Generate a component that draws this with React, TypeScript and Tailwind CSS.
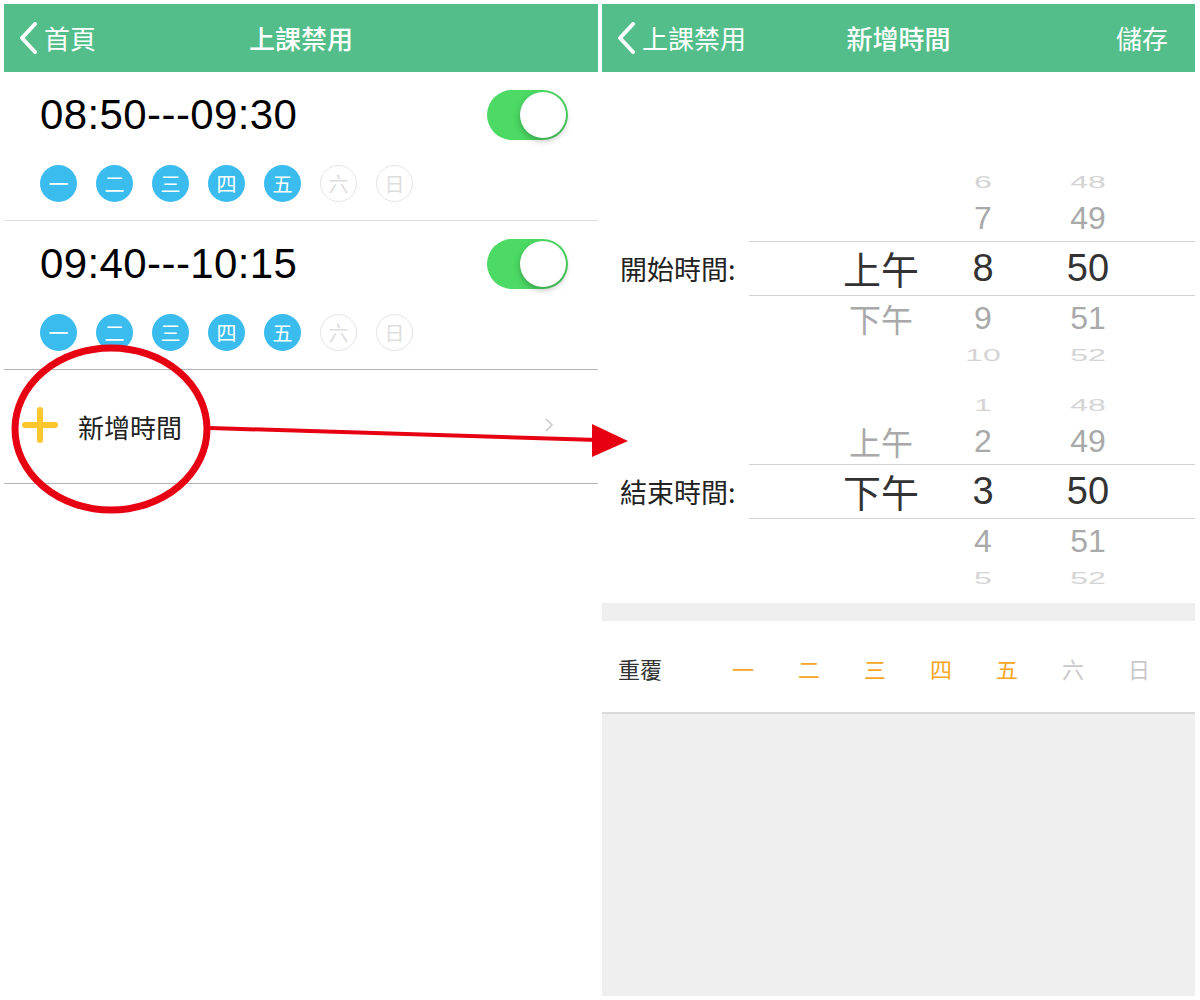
import React from 'react';

const cjk = "font-['Noto_Sans_CJK_TC',sans-serif]";
const num = "font-['Liberation_Sans','Noto_Sans_CJK_TC',sans-serif]";

const days = ['一', '二', '三', '四', '五', '六', '日'];

function Chevron() {
  return (
    <svg width="20" height="32" viewBox="0 0 20 32" className="shrink-0">
      <path d="M17 2 L4 16 L17 30" fill="none" stroke="white" strokeWidth="4" strokeLinecap="round" strokeLinejoin="round" />
    </svg>
  );
}

function Header({ back, title, action }: { back: string; title: string; action?: string }) {
  return (
    <div className={`relative flex h-[68px] items-center bg-[#53be89] text-white ${cjk}`}>
      <div className="flex items-center gap-[6px] pl-[14px]">
        <Chevron />
        <span className="text-[26px] leading-none">{back}</span>
      </div>
      <div className="absolute inset-x-0 top-0 flex h-full items-center justify-center pointer-events-none">
        <span className="text-[26px] font-medium leading-none">{title}</span>
      </div>
      {action && <span className="ml-auto pr-[27px] text-[26px] leading-none">{action}</span>}
    </div>
  );
}

function Toggle() {
  return (
    <div className="flex h-[50px] w-[81px] items-center justify-end rounded-full bg-[#4cd964] pr-[2px]">
      <div className="h-[46px] w-[46px] rounded-full bg-white shadow-[0_3px_6px_rgba(0,0,0,0.25)]" />
    </div>
  );
}

function TimeRow({ time, border }: { time: string; border: string }) {
  return (
    <div className={`border-b px-[36px] pr-[30px] pt-[18px] pb-[18px] ${border}`}>
      <div className="flex h-[50px] items-center justify-between">
        <span className={`text-[42px] leading-none tracking-[0.4px] text-black ${num}`}>{time}</span>
        <Toggle />
      </div>
      <div className="mt-[25px] flex gap-[19px]">
        {days.map((d, i) =>
          i < 5 ? (
            <div key={d} className={`flex h-[37px] w-[37px] items-center justify-center rounded-full bg-[#3bbcee] text-[20px] text-white ${cjk}`}>
              {d}
            </div>
          ) : (
            <div key={d} className={`flex h-[37px] w-[37px] items-center justify-center rounded-full border border-[#e4e4e4] text-[20px] text-[#dedede] ${cjk}`}>
              {d}
            </div>
          )
        )}
      </div>
    </div>
  );
}

type Cell = { ap?: string; h: string; m: string };

function Picker({ label, rows }: { label: string; rows: Cell[] }) {
  const outer = 'text-[32px] text-[#d4d4d4] scale-y-[0.5]';
  const near = 'text-[32px] text-[#a9a9a9]';
  const styles = [
    { h: 'h-[26px]', t: outer },
    { h: 'h-[46px]', t: near },
    { h: 'h-[55px]', t: 'text-[38px] text-[#333333]' },
    { h: 'h-[45px]', t: near },
    { h: 'h-[28px]', t: outer },
  ];
  return (
    <div className="flex h-[223px] items-center">
      <div className={`w-[147px] pl-[18px] text-[27px] leading-none text-[#222222] ${cjk}`}>{label}</div>
      <div className="flex-1">
        {rows.map((r, i) => (
          <div
            key={i}
            className={`flex items-center pl-[82px] ${styles[i].h} ${i === 2 ? 'border-y border-[#d2d2d2]' : ''}`}
          >
            <span className={`w-[100px] text-center leading-none ${styles[i].t} ${cjk}`}>{r.ap ?? ''}</span>
            <span className={`w-[104px] text-center leading-none ${styles[i].t} ${num}`}>{r.h}</span>
            <span className={`w-[106px] text-center leading-none ${styles[i].t} ${num}`}>{r.m}</span>
          </div>
        ))}
      </div>
    </div>
  );
}

export default function App() {
  return (
    <div className="relative flex h-[1000px] w-[1200px] gap-[4px] overflow-hidden bg-white pl-[4px] pt-[4px]">
      {/* left screen */}
      <div className="w-[594px]">
        <Header back="首頁" title="上課禁用" />
        <TimeRow time="08:50---09:30" border="border-[#dedede]" />
        <TimeRow time="09:40---10:15" border="border-[#b4b4b4]" />
        <div className="flex h-[114px] items-center border-b border-[#b4b4b4] pl-[18px] pr-[44px]">
          <svg width="36" height="36" viewBox="0 0 36 36" className="shrink-0 -mt-[4px]">
            <path d="M18 3 V33 M3 18 H33" stroke="#fcc72c" strokeWidth="6" strokeLinecap="round" />
          </svg>
          <span className={`ml-[20px] text-[26px] leading-none text-[#222222] ${cjk}`}>新增時間</span>
          <svg width="10" height="16" viewBox="0 0 10 16" className="ml-auto -mt-[4px]">
            <path d="M2 2 L8 8 L2 14" fill="none" stroke="#c7c7cc" strokeWidth="1.5" />
          </svg>
        </div>
      </div>

      {/* right screen */}
      <div className="flex h-[992px] w-[593px] flex-col">
        <Header back="上課禁用" title="新增時間" action="儲存" />
        <div className="pt-[85px]">
          <Picker
            label="開始時間:"
            rows={[
              { h: '6', m: '48' },
              { h: '7', m: '49' },
              { ap: '上午', h: '8', m: '50' },
              { ap: '下午', h: '9', m: '51' },
              { h: '10', m: '52' },
            ]}
          />
          <Picker
            label="結束時間:"
            rows={[
              { h: '1', m: '48' },
              { ap: '上午', h: '2', m: '49' },
              { ap: '下午', h: '3', m: '50' },
              { h: '4', m: '51' },
              { h: '5', m: '52' },
            ]}
          />
        </div>
        <div className="h-[18px] bg-[#efefef]" />
        <div className={`flex h-[93px] items-center border-b-[2px] border-[#dadada] pl-[16px] pt-[3px] ${cjk}`}>
          <span className="w-[92px] text-[22px] text-[#333333]">重覆</span>
          {days.map((d, i) => (
            <span key={d} className={`w-[66px] text-center text-[22px] ${i < 5 ? 'text-[#f5a623]' : 'text-[#c9c9c9]'}`}>
              {d}
            </span>
          ))}
        </div>
        <div className="flex-1 bg-[#efefef]" />
      </div>

      {/* red annotation */}
      <svg className="pointer-events-none absolute left-0 top-0" width="1200" height="1000" viewBox="0 0 1200 1000">
        <ellipse cx="111" cy="429" rx="96" ry="81" fill="none" stroke="#e60012" strokeWidth="7" />
        <line x1="210" y1="428" x2="598" y2="440" stroke="#e60012" strokeWidth="4" />
        <polygon points="592,424 628,441 592,457" fill="#e60012" />
      </svg>
    </div>
  );
}
